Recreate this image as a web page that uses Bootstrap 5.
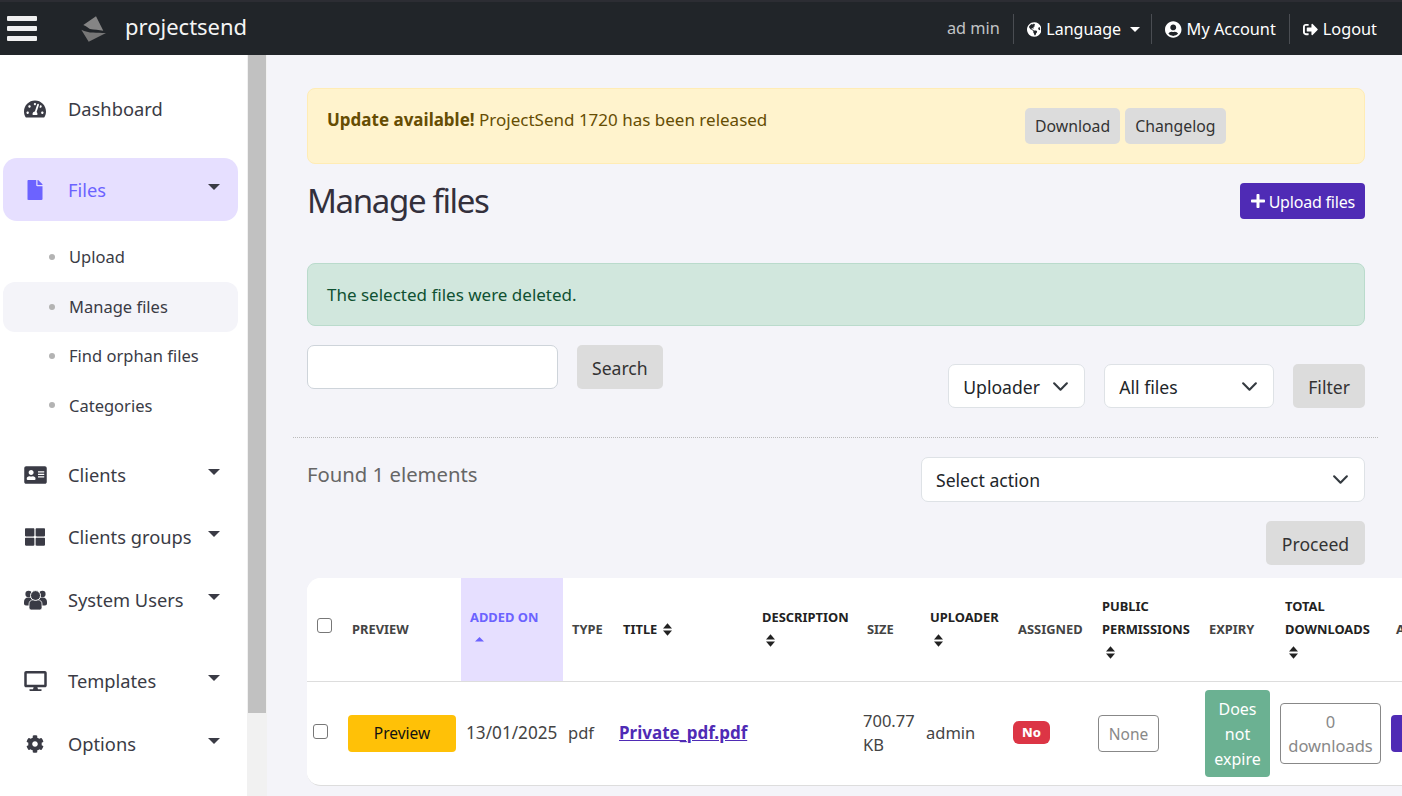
<!DOCTYPE html>
<html lang="en">
<head>
<meta charset="utf-8">
<title>Manage files</title>
<link href="https://cdn.jsdelivr.net/npm/bootstrap@5.3.0/dist/css/bootstrap.min.css" rel="stylesheet">
<style>
html,body{height:100%;overflow:hidden}
body{font-family:"Noto Sans",sans-serif;background:#f4f4f9;color:#333;font-size:17.6px}
svg{fill:currentColor;display:block}
.ps-head{height:55px;background:#212529;border-top:2px solid #2c2d33;color:#fff;padding-right:12px}
.ps-burger{width:30px;margin-left:7px;margin-right:44px;gap:5px;display:flex;flex-direction:column}
.ps-burger i{display:block;height:5px;background:#f0f0f0;border-radius:1px}
.ps-logo{width:26px;height:28px;margin-right:18px}
.ps-brand{font-size:22px;color:#f5f5f5;line-height:1;margin-top:-6px}
.ps-who{font-size:16.3px;color:#c2c4c6;padding-right:13px}
.ps-link{font-size:16.3px;color:#fff;border-left:1px solid #4a4d52;height:30px;padding:0 13px;gap:5px;text-decoration:none;margin-top:1px}
.ps-link svg{height:15px;width:auto}
.ps-link .ps-usr{height:17px}
.ps-lang{font-size:16px;padding-right:11px}
.ps-tri{width:0;height:0;border:5px solid transparent;border-top-color:currentColor;border-bottom:0;margin-left:4px}
.ps-body{height:calc(100vh - 55px)}
.ps-side{width:247px;flex:none;background:#fff;padding:23px 9px 0 3px}
.ps-item{height:63px;border-radius:14px;color:#3a3b45;font-size:18.3px;text-decoration:none;padding:0 0 2px 65px}
.ps-item .ps-ico{width:44px;color:#3a3b45;display:flex;justify-content:center;margin-left:-55px;margin-right:11px}
.ps-item .ps-tri{margin-left:auto;margin-right:18px;border-width:6px;border-bottom:0;margin-top:-5px;color:#3a3b45}
.ps-item.ps-on{background:#e6dfff;color:#6c63ff;padding-bottom:0}
.ps-item.ps-on .ps-ico{color:#6c63ff}
.ps-gap1{margin-bottom:17px}
.ps-gap2{margin-bottom:18px}
.ps-tight{margin-bottom:-1px}
.ps-sub{margin:11px 0 14px;padding:0;list-style:none}
.ps-sub a{height:49.5px;display:flex;align-items:center;color:#3a3b45;font-size:16.5px;text-decoration:none;padding:2px 0 0 46px;border-radius:12px;gap:14px}
.ps-sub a::before{content:"";width:6px;height:6px;border-radius:50%;background:#b3b3b3;flex:none;margin-top:-2px}
.ps-sub a.ps-cur{background:#f4f4f9;height:50px;margin-bottom:-.5px}
.ps-track{width:20px;flex:none;background:#f1f1f1}
.ps-thumb{width:18px;height:658px;background:#c1c1c1;margin-left:1px}
.ps-main{flex:1 1 auto;min-width:0;padding:33px 37px 0 40px}
.ps-alert{height:76px;background:#fff3cd;border:1px solid #ffecb5;color:#664d03;border-radius:8px;padding:19px 19px;font-size:17px;margin-bottom:0}
.ps-alert-text{width:698px;line-height:24px}
.ps-alert-btns{gap:5px}
.ps-grey{background:#dcdcdc;color:#333;border:0;border-radius:5px}
.ps-grey:hover{background:#d0d0d0}
.ps-alert .ps-grey{height:36px;padding:0 10px;font-size:15.8px;line-height:37px}
.ps-title{height:99px;padding-top:19px}
.ps-title h1{font-size:33px;letter-spacing:-1.35px;margin:-1px 0 0;font-weight:400;color:#33303c;line-height:38px}
.ps-up{background:#4f2bb5;color:#fff;font-size:16px;height:36px;padding:1px 10px 0 11px;border:0;border-radius:4px;gap:4px;line-height:1;letter-spacing:-.2px}
.ps-up svg{height:16px;width:14px;margin-top:-1px}
.ps-ok{height:63px;background:#d1e7dd;border:1px solid #badbcc;color:#0f5132;border-radius:8px;padding:0 19px;font-size:17px;margin-bottom:19px}
.ps-search{width:251px;height:44px;border-radius:7px;border:1px solid #ced4da;background:#fff;font-size:17.6px;margin-right:19px}
.ps-form .ps-grey{height:44px;font-size:17.6px;padding:2px 15px 0}
.ps-sel{font-size:17.6px;height:44px;border-radius:7px;padding:2px 38px 0 14px;color:#212529;background-color:#fff;background-position:right 15px center;background-size:17px 17px}
.ps-filter{margin-top:19px;gap:19px}
.ps-rule{border-top:1px dotted #bbb;margin:29px -13px 0 -14px}
.ps-found{font-size:20.3px;color:#666;margin-top:18px;line-height:36px}
.ps-act{width:444px;margin-top:19px}
.ps-act .ps-sel{height:45px}
.ps-proceed{height:44px;width:99px;margin-top:19px;font-size:17.6px;padding:2px 0 0}
.ps-tablebox{width:1200px;background:#fff;border-radius:14px 0 0 14px;border-bottom:1px solid #ddd;margin-top:13px;height:208px;overflow:hidden}
.ps-tbl{table-layout:fixed;width:1200px;margin:0;border-collapse:collapse;color:#444}
.ps-tbl th{height:103px;padding:0 9px;font-size:12.9px;font-weight:700;line-height:23px;text-transform:uppercase;color:#444;vertical-align:middle;border-bottom:1px solid #ddd;background:#fff;white-space:normal}
.ps-tbl th.ps-dark{color:#222}
.ps-tbl th.ps-sorted{background:#e6dfff;color:#6c63ff}
.ps-tbl td{height:103px;padding:0 5px;font-size:16.5px;line-height:24px;vertical-align:middle;border:0;background:#fff;color:#444}
.ps-tbl td.ps-wide{font-size:17.2px}
.ps-srt{display:inline-block;width:9px;height:13px;vertical-align:-2px;margin-left:2px}
.ps-check{width:15px;height:15px;margin:0;border:1px solid #777;border-radius:3px;appearance:none;background:#fff;display:block}
.ps-check-h{margin:-7px 0 0 1px}
.ps-check-b{margin:-3px 0 0 1px}
.ps-low{margin-top:2px}
.ps-prev{background:#ffc107;color:#111;width:108px;height:37px;border-radius:4px;font-size:15.5px;padding:0;border:0;display:flex;align-items:center;justify-content:center}
.ps-file{color:#4f2bb5;font-weight:700;font-size:17px}
.ps-no{background:#dc3545;color:#fff;font-size:13px;font-weight:800;width:37px;text-align:center;height:23px;line-height:23px;border-radius:6px;display:block;margin-left:-1px}
.ps-none{border:1px solid #888;color:#888;border-radius:4px;width:61px;height:37px;display:flex;align-items:center;justify-content:center;font-size:15.5px}
.ps-exp{background:#6bb192;color:#fff;border-radius:4px;width:65px;height:87px;display:flex;align-items:center;text-align:center;line-height:25px;font-size:16px;justify-content:center;padding-top:2px}
.ps-dl{border:1px solid #888;border-radius:4px;width:101px;height:61px;color:#888;text-align:center;font-size:16.5px;line-height:24px;padding-top:6px;margin-left:-1px}
.ps-edit{background:#4f2bb5;color:#fff;height:37px;border-radius:4px;border:0;font-size:15.5px;padding:0 12px;display:inline-flex;align-items:center;margin-left:-1px}
</style>
</head>
<body>
<header class="ps-head d-flex align-items-center">
  <div class="ps-burger"><i></i><i></i><i></i></div>
  <svg class="ps-logo" viewBox="0 0 26 28"><path d="M15 1.3 22.3 15.7C18 15 13 14.5 9 14 7 12.5 4.500 11 2.300 10Z" fill="#858585"/><path d="M.3 14.7C4 16.500 8 17.500 12 17.600 16 18 20 18 25 18L7.700 26.700Z" fill="#777"/></svg>
  <div class="ps-brand">projectsend</div>
  <div class="ms-auto d-flex align-items-center">
    <span class="ps-who">ad min</span>
    <a class="ps-link ps-lang d-flex align-items-center" href="#"><svg viewBox="0 0 496 512"><path d="M248 8C111.03 8 0 119.03 0 256s111.03 248 248 248 248-111.03 248-248S384.97 8 248 8zm82.29 357.6c-3.9 3.88-7.99 7.95-11.31 11.28-2.99 3-5.1 6.7-6.17 10.71-1.51 5.66-2.73 11.38-4.77 16.87l-17.39 46.85c-13.76 3-28 4.69-42.65 4.69v-27.38c1.69-12.62-7.64-36.26-22.63-51.25-6-6-9.37-14.14-9.37-22.63v-32.01c0-11.64-6.27-22.34-16.46-27.97-14.37-7.95-34.81-19.06-48.81-26.11-11.48-5.78-22.1-13.14-31.65-21.75l-.8-.72a114.792 114.792 0 0 1-18.06-20.74c-9.38-13.77-24.66-36.42-34.59-51.14 20.47-45.5 57.36-82.04 103.2-101.89l24.01 12.01C203.48 89.74 216 82.01 216 70.11v-11.3c7.99-1.29 16.12-2.11 24.45-2.45l28.3 28.3c6.25 6.25 6.25 16.38 0 22.63L264 112l-10.34 10.34c-3.12 3.12-3.12 8.19 0 11.31l4.69 4.69c3.12 3.12 3.12 8.19 0 11.31l-8 8a8.008 8.008 0 0 1-5.66 2.34h-8.99c-2.08 0-4.08.81-5.58 2.27l-9.92 9.65a8.008 8.008 0 0 0-1.58 9.31l15.59 31.19c2.66 5.32-1.21 11.58-7.15 11.58h-5.64c-1.93 0-3.79-.7-5.24-1.96l-9.28-8.06a16.017 16.017 0 0 0-15.55-3.1l-31.17 10.39a11.95 11.95 0 0 0-8.17 11.34c0 4.53 2.56 8.66 6.61 10.69l11.08 5.54c9.41 4.71 19.79 7.16 30.31 7.16s22.59 27.29 32 32h66.75c8.49 0 16.62 3.37 22.63 9.37l13.69 13.69a30.503 30.503 0 0 1 8.93 21.57 46.536 46.536 0 0 1-13.72 32.98zM417 274.25c-5.79-1.45-10.84-5-14.15-9.97l-17.98-26.97a23.97 23.97 0 0 1 0-26.62l19.59-29.38c2.32-3.47 5.5-6.29 9.24-8.15l12.98-6.49C440.2 193.59 448 223.87 448 256c0 8.67-.74 17.16-1.82 25.54L417 274.25z"/></svg>Language<span class="ps-tri"></span></a>
    <a class="ps-link d-flex align-items-center" href="#"><svg class="ps-usr" viewBox="0 0 496 512"><path d="M248 8C111 8 0 119 0 256s111 248 248 248 248-111 248-248S385 8 248 8zm0 96c48.6 0 88 39.4 88 88s-39.4 88-88 88-88-39.4-88-88 39.4-88 88-88zm0 344c-58.7 0-111.3-26.6-146.5-68.2 18.8-35.4 55.6-59.8 98.5-59.8 2.4 0 4.8.4 7.1 1.1 13 4.2 26.6 6.9 40.9 6.9 14.3 0 28-2.7 40.9-6.9 2.3-.7 4.7-1.1 7.1-1.1 42.9 0 79.7 24.4 98.5 59.8C359.3 421.4 306.7 448 248 448z"/></svg>My Account</a>
    <a class="ps-link d-flex align-items-center" href="#"><svg viewBox="0 0 512 512"><path d="M497 273L329 441c-15 15-41 4.5-41-17v-96H152c-13.3 0-24-10.7-24-24v-96c0-13.3 10.7-24 24-24h136V88c0-21.4 25.9-32 41-17l168 168c9.3 9.4 9.3 24.6 0 34zM192 436v-40c0-6.6-5.4-12-12-12H96c-17.7 0-32-14.3-32-32V160c0-17.7 14.3-32 32-32h84c6.6 0 12-5.4 12-12V76c0-6.6-5.4-12-12-12H96c-53 0-96 43-96 96v192c0 53 43 96 96 96h84c6.6 0 12-5.4 12-12z"/></svg>Logout</a>
  </div>
</header>
<div class="ps-body d-flex">
  <nav class="ps-side">
    <a class="ps-item ps-gap1 d-flex align-items-center" href="#"><span class="ps-ico"><svg width="22" height="20" viewBox="0 0 576 512"><path d="M288 32C128.94 32 0 160.94 0 320c0 52.8 14.25 102.26 39.06 144.8 5.61 9.62 16.3 15.2 27.44 15.2h443c11.14 0 21.83-5.58 27.44-15.2C561.75 422.26 576 372.8 576 320c0-159.06-128.94-288-288-288zm0 64c14.71 0 26.58 10.13 30.32 23.65-1.11 2.26-2.64 4.23-3.45 6.67l-9.22 27.67c-5.13 3.49-10.97 6.01-17.64 6.01-17.67 0-32-14.33-32-32S270.33 96 288 96zM96 384c-17.67 0-32-14.33-32-32s14.33-32 32-32 32 14.33 32 32-14.33 32-32 32zm48-160c-17.67 0-32-14.33-32-32s14.33-32 32-32 32 14.33 32 32-14.33 32-32 32zm246.77-72.41l-61.33 184C343.13 347.33 352 364.54 352 384c0 11.72-3.38 22.55-8.88 32H232.88c-5.5-9.45-8.88-20.28-8.88-32 0-33.94 26.5-61.43 59.9-63.59l61.34-184.01c4.17-12.56 17.73-19.45 30.36-15.17 12.57 4.19 19.35 17.79 15.17 30.36zm14.66 57.2l15.52-46.55c3.47-1.29 7.13-2.23 11.05-2.23 17.67 0 32 14.33 32 32s-14.33 32-32 32c-11.38-.01-20.89-6.28-26.57-15.22zM480 384c-17.67 0-32-14.33-32-32s14.33-32 32-32 32 14.33 32 32-14.33 32-32 32z"/></svg></span>Dashboard</a>
    <a class="ps-item ps-on d-flex align-items-center" href="#"><span class="ps-ico"><svg width="18" height="20" viewBox="0 0 384 512"><path d="M224 136V0H24C10.7 0 0 10.7 0 24v464c0 13.3 10.7 24 24 24h336c13.3 0 24-10.7 24-24V160H248c-13.2 0-24-10.8-24-24zm160-14.1v6.1H256V0h6.1c6.4 0 12.5 2.5 17 7l97.9 98c4.5 4.5 7 10.6 7 16.9z"/></svg></span>Files<span class="ps-tri"></span></a>
    <ul class="ps-sub">
      <li><a href="#">Upload</a></li>
      <li><a class="ps-cur" href="#">Manage files</a></li>
      <li><a href="#">Find orphan files</a></li>
      <li><a href="#">Categories</a></li>
    </ul>
    <a class="ps-item ps-tight d-flex align-items-center" href="#"><span class="ps-ico"><svg width="23" height="20" viewBox="0 0 576 512"><path d="M528 32H48C21.5 32 0 53.5 0 80v352c0 26.5 21.5 48 48 48h480c26.5 0 48-21.5 48-48V80c0-26.5-21.5-48-48-48zm-352 96c35.3 0 64 28.7 64 64s-28.7 64-64 64-64-28.7-64-64 28.7-64 64-64zm112 236.8c0 10.6-10 19.2-22.4 19.2H86.4C74 384 64 375.4 64 364.8v-19.2c0-31.8 30.1-57.6 67.2-57.6h5c12.3 5.1 25.7 8 39.8 8s27.6-2.9 39.8-8h5c37.1 0 67.2 25.8 67.2 57.6v19.2zM512 312c0 4.4-3.6 8-8 8H360c-4.4 0-8-3.6-8-8v-16c0-4.4 3.6-8 8-8h144c4.4 0 8 3.6 8 8v16zm0-64c0 4.4-3.6 8-8 8H360c-4.4 0-8-3.6-8-8v-16c0-4.4 3.6-8 8-8h144c4.4 0 8 3.6 8 8v16zm0-64c0 4.4-3.6 8-8 8H360c-4.4 0-8-3.6-8-8v-16c0-4.4 3.6-8 8-8h144c4.4 0 8 3.6 8 8v16z"/></svg></span>Clients<span class="ps-tri"></span></a>
    <a class="ps-item d-flex align-items-center" href="#"><span class="ps-ico"><svg width="20" height="20" viewBox="0 0 512 512"><path d="M296 32h192c13.255 0 24 10.745 24 24v160c0 13.255-10.745 24-24 24H296c-13.255 0-24-10.745-24-24V56c0-13.255 10.745-24 24-24zm-80 0H24C10.745 32 0 42.745 0 56v160c0 13.255 10.745 24 24 24h192c13.255 0 24-10.745 24-24V56c0-13.255-10.745-24-24-24zM0 296v160c0 13.255 10.745 24 24 24h192c13.255 0 24-10.745 24-24V296c0-13.255-10.745-24-24-24H24c-13.255 0-24 10.745-24 24zm296 184h192c13.255 0 24-10.745 24-24V296c0-13.255-10.745-24-24-24H296c-13.255 0-24 10.745-24 24v160c0 13.255 10.745 24 24 24z"/></svg></span>Clients groups<span class="ps-tri"></span></a>
    <a class="ps-item ps-gap2 d-flex align-items-center" href="#"><span class="ps-ico"><svg width="23" height="20" viewBox="0 0 23 20"><circle cx="4.6" cy="4" r="3.2"/><circle cx="18.4" cy="4" r="3.2"/><path d="M0 12c0-2.6 1.8-4.4 4-4.4h2c1.600 0 2 1 2 2v6H2c-1.200 0-2-.8-2-2zM23 12c0-2.600-1.800-4.400-4-4.400h-2c-1.600 0-2 1-2 2v6h6c1.200 0 2-.8 2-2z"/><circle cx="11.500" cy="5.600" r="5" stroke="#fff" stroke-width="1"/><path d="M5 14c0-2.600 2-4.200 4-4.200 1.500.8 3.500.8 5 0 2 0 4 1.600 4 4.200v3.500c0 1.400-1 2.500-2.500 2.500h-8C6 20 5 18.900 5 17.500z" stroke="#fff" stroke-width=".8"/></svg></span>System Users<span class="ps-tri"></span></a>
    <a class="ps-item d-flex align-items-center" href="#"><span class="ps-ico"><svg width="23" height="20" viewBox="0 0 576 512"><path d="M528 0H48C21.5 0 0 21.5 0 48v320c0 26.5 21.5 48 48 48h192l-16 48h-72c-13.3 0-24 10.7-24 24s10.7 24 24 24h272c13.3 0 24-10.7 24-24s-10.7-24-24-24h-72l-16-48h192c26.5 0 48-21.5 48-48V48c0-26.5-21.5-48-48-48zm-16 352H64V64h448v288z"/></svg></span>Templates<span class="ps-tri"></span></a>
    <a class="ps-item d-flex align-items-center" href="#"><span class="ps-ico"><svg width="18" height="18" viewBox="0 0 512 512"><path d="M487.4 315.7l-42.6-24.6c4.3-23.2 4.3-47 0-70.2l42.6-24.6c4.9-2.8 7.1-8.6 5.5-14-11.1-35.6-30-67.8-54.7-94.6-3.8-4.1-10-5.1-14.8-2.3L380.8 110c-17.9-15.4-38.5-27.3-60.8-35.1V25.8c0-5.6-3.9-10.5-9.4-11.7-36.7-8.2-74.3-7.8-109.2 0-5.5 1.2-9.4 6.1-9.4 11.7V75c-22.2 7.9-42.8 19.8-60.8 35.1L88.7 85.5c-4.9-2.8-11-1.9-14.8 2.3-24.7 26.7-43.6 58.9-54.7 94.6-1.7 5.4.6 11.2 5.5 14L67.3 221c-4.3 23.2-4.3 47 0 70.2l-42.6 24.6c-4.9 2.8-7.1 8.6-5.5 14 11.1 35.6 30 67.8 54.7 94.6 3.8 4.1 10 5.1 14.8 2.3l42.6-24.6c17.9 15.4 38.5 27.3 60.8 35.1v49.2c0 5.6 3.9 10.5 9.4 11.7 36.7 8.2 74.3 7.8 109.2 0 5.5-1.2 9.4-6.1 9.4-11.7v-49.2c22.2-7.9 42.8-19.8 60.8-35.1l42.6 24.6c4.9 2.8 11 1.9 14.8-2.3 24.7-26.7 43.6-58.9 54.7-94.6 1.5-5.5-.7-11.3-5.6-14.1zM256 336c-44.1 0-80-35.9-80-80s35.9-80 80-80 80 35.9 80 80-35.9 80-80 80z"/></svg></span>Options<span class="ps-tri"></span></a>
  </nav>
  <div class="ps-track"><div class="ps-thumb"></div></div>
  <main class="ps-main">
    <div class="alert ps-alert d-flex align-items-start">
      <div class="ps-alert-text"><strong>Update available!</strong> ProjectSend 1720 has been released</div>
      <div class="ps-alert-btns d-flex"><a class="btn ps-grey" href="#">Download</a><a class="btn ps-grey" href="#">Changelog</a></div>
    </div>
    <div class="ps-title d-flex justify-content-between align-items-start">
      <h1>Manage files</h1>
      <a class="btn ps-up d-flex align-items-center" href="#"><svg viewBox="0 0 448 512"><path d="M416 208H272V64c0-17.67-14.33-32-32-32h-32c-17.67 0-32 14.33-32 32v144H32c-17.67 0-32 14.33-32 32v32c0 17.67 14.33 32 32 32h144v144c0 17.67 14.33 32 32 32h32c17.67 0 32-14.33 32-32V304h144c17.67 0 32-14.33 32-32v-32c0-17.67-14.33-32-32-32z"/></svg>Upload files</a>
    </div>
    <div class="alert ps-ok d-flex align-items-center">The selected files were deleted.</div>
    <div class="ps-form d-flex justify-content-between align-items-start">
      <div class="d-flex"><input class="form-control ps-search" type="text" aria-label="Search"><button class="btn ps-grey" type="button">Search</button></div>
      <div class="ps-filter d-flex">
        <select class="form-select ps-sel" style="width:137px" aria-label="Uploader"><option>Uploader</option></select>
        <select class="form-select ps-sel" style="width:170px" aria-label="Status"><option>All files</option></select>
        <button class="btn ps-grey" type="button">Filter</button>
      </div>
    </div>
    <div class="ps-rule"></div>
    <div class="d-flex justify-content-between align-items-start">
      <div class="ps-found">Found 1 elements</div>
      <div class="ps-act d-flex flex-column align-items-end">
        <select class="form-select ps-sel" aria-label="Action"><option>Select action</option></select>
        <button class="btn ps-grey ps-proceed" type="button">Proceed</button>
      </div>
    </div>
    <div class="ps-tablebox">
      <table class="table ps-tbl">
        <colgroup>
          <col style="width:36px"><col style="width:118px"><col style="width:102px"><col style="width:51px"><col style="width:139px"><col style="width:105px"><col style="width:63px"><col style="width:88px"><col style="width:84px"><col style="width:107px"><col style="width:76px"><col style="width:111px"><col style="width:120px">
        </colgroup>
        <thead>
          <tr>
            <th><input class="ps-check ps-check-h" type="checkbox" aria-label="Select all"></th>
            <th>Preview</th>
            <th class="ps-sorted">Added on<br><svg class="ps-srt" viewBox="0 0 10 14" style="margin-left:5px"><polygon points="0,8 10,8 5,3"/></svg></th>
            <th>Type</th>
            <th class="ps-dark">Title <svg class="ps-srt" viewBox="0 0 10 14"><polygon points="0,6 10,6 5,0"/><polygon points="0,8 10,8 5,14"/></svg></th>
            <th class="ps-dark">Description<br><svg class="ps-srt m-0 ms-1" viewBox="0 0 10 14"><polygon points="0,6 10,6 5,0"/><polygon points="0,8 10,8 5,14"/></svg></th>
            <th>Size</th>
            <th class="ps-dark">Uploader<br><svg class="ps-srt m-0 ms-1" viewBox="0 0 10 14"><polygon points="0,6 10,6 5,0"/><polygon points="0,8 10,8 5,14"/></svg></th>
            <th>Assigned</th>
            <th class="ps-dark">Public Permissions<br><svg class="ps-srt ms-1" viewBox="0 0 10 14"><polygon points="0,6 10,6 5,0"/><polygon points="0,8 10,8 5,14"/></svg></th>
            <th>Expiry</th>
            <th class="ps-dark">Total Downloads<br><svg class="ps-srt ms-1" viewBox="0 0 10 14"><polygon points="0,6 10,6 5,0"/><polygon points="0,8 10,8 5,14"/></svg></th>
            <th>Actions</th>
          </tr>
        </thead>
        <tbody>
          <tr>
            <td><input class="ps-check ps-check-b" type="checkbox" aria-label="Select row"></td>
            <td><a class="btn ps-prev ps-low" href="#">Preview</a></td>
            <td class="ps-wide">13/01/2025</td>
            <td>pdf</td>
            <td><a class="ps-file" href="#">Private_pdf.pdf</a></td>
            <td></td>
            <td>700.77 KB</td>
            <td>admin</td>
            <td><span class="ps-no">No</span></td>
            <td><span class="ps-none ps-low">None</span></td>
            <td><span class="ps-exp ps-low">Does not expire</span></td>
            <td><div class="ps-dl ps-low">0<br>downloads</div></td>
            <td><a class="btn ps-edit ps-low" href="#">Edit</a></td>
          </tr>
        </tbody>
      </table>
    </div>
  </main>
</div>
<script src="https://cdn.jsdelivr.net/npm/bootstrap@5.3.0/dist/js/bootstrap.bundle.min.js"></script>
</body>
</html>
